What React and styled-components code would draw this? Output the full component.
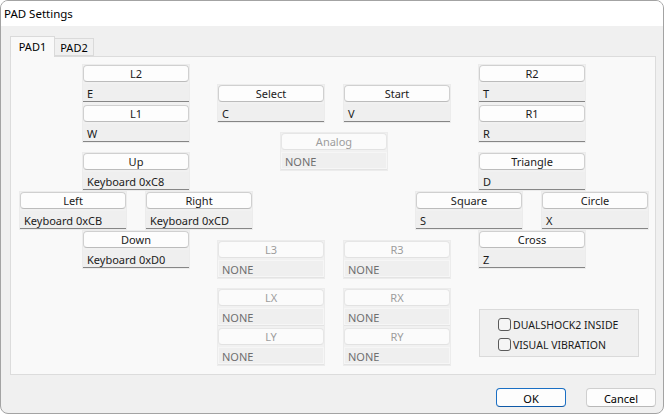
import styled, { createGlobalStyle } from "styled-components";

const GlobalStyle = createGlobalStyle`
  html, body {
    margin: 0;
    padding: 0;
    background: #ffffff;
  }
  body {
    font-family: "Noto Sans", "DejaVu Sans", sans-serif;
    font-size: 11px;
    color: #1b1b1b;
  }
`;

const Window = styled.div`
  box-sizing: border-box;
  width: 664px;
  height: 414px;
  border: 1px solid #a3a3a3;
  border-radius: 8px;
  overflow: hidden;
  background: #f0f0f0;
  display: flex;
  flex-direction: column;
`;

const TitleBar = styled.div`
  height: 25px;
  background: #ffffff;
  display: flex;
  align-items: center;
  padding-left: 3px;
  padding-bottom: 1px;
  box-sizing: border-box;
  font-size: 11.5px;
  color: #000;
`;

const Body = styled.div`
  padding: 10px 7px 0 9px;
  display: flex;
  flex-direction: column;
`;

const TabStrip = styled.div`
  display: flex;
  align-items: flex-end;
  height: 20px;
  position: relative;
  z-index: 1;
`;

const Tab = styled.div`
  box-sizing: border-box;
  width: ${(p) => p.$w}px;
  height: ${(p) => (p.$active ? 21 : 18)}px;
  margin-bottom: ${(p) => (p.$active ? -1 : 0)}px;
  background: ${(p) => (p.$active ? "#f9f9f9" : "#f0f0f0")};
  border: 1px solid #dadada;
  border-bottom: ${(p) => (p.$active ? "none" : "1px solid #dadada")};
  border-left: ${(p) => (p.$first ? "1px solid #dadada" : "none")};
  display: flex;
  align-items: center;
  justify-content: center;
  color: #000;
  padding-bottom: ${(p) => (p.$active ? 1 : 0)}px;
`;

const Panel = styled.div`
  box-sizing: border-box;
  height: 319px;
  border: 1px solid #dcdcdc;
  background: #f9f9f9;
  padding: 8px 0 0 9px;
`;

const Board = styled.div`
  display: grid;
  grid-template-columns: 198px 34px 164px 34px 198px;
  align-items: start;
`;

const Cluster = styled.div`
  grid-row: 1;
  grid-column: ${(p) => p.$cols};
  display: grid;
  grid-template-columns: repeat(4, 43px);
  column-gap: 20px;
  row-gap: 2px;
  align-items: start;
  padding-top: ${(p) => p.$top || 0}px;
`;

const Frame = styled.div`
  grid-column: ${(p) => p.$cols};
  grid-row: ${(p) => p.$row};
  margin-top: ${(p) => p.$mt || 0}px;
  display: flex;
  flex-direction: column;
  gap: ${(p) => p.$gap || 3}px;
  background: #f1f1f1;
  box-shadow: 0 0 0 1px #ececec;
`;

const Pair = styled.div`
  display: flex;
  flex-direction: column;
  gap: 2px;
`;

const KeyButton = styled.div`
  box-sizing: border-box;
  height: 17px;
  padding-top: 1px;
  border: 1px solid ${(p) => (p.$off ? "#e6e6e6" : "#d0d0d0")};
  border-bottom-color: ${(p) => (p.$off ? "#e2e2e2" : "#bcbcbc")};
  border-radius: 4px;
  background: ${(p) => (p.$off ? "#fbfbfb" : "#fdfdfd")};
  color: ${(p) => (p.$off ? "#9d9d9d" : "#1b1b1b")};
  display: flex;
  align-items: center;
  justify-content: center;
  line-height: 14px;
`;

const Field = styled.div`
  box-sizing: border-box;
  height: 18px;
  padding: 2px 0 0 4px;
  background: #efefef;
  border-bottom: 1px solid ${(p) => (p.$off ? "#e4e4e4" : "#868686")};
  box-shadow: ${(p) => (p.$off ? "0 0 0 1px #f6f6f6 inset" : "none")};
  color: ${(p) => (p.$off ? "#6f6f6f" : "#1b1b1b")};
  display: flex;
  align-items: center;
`;

const OptionBox = styled.div`
  grid-column: 2 / 5;
  grid-row: 6;
  margin-top: 37px;
  box-sizing: border-box;
  width: 160px;
  height: 48px;
  background: #f0f0f0;
  border: 1px solid #dadada;
  padding: 7px 0 0 18px;
  display: flex;
  flex-direction: column;
  gap: 6px;
`;

const CheckRow = styled.label`
  display: flex;
  align-items: center;
  gap: 2px;
  height: 13px;
  color: #1b1b1b;
  font-size: 10.5px;
  padding-top: 1px;
`;

const CheckBox = styled.span`
  box-sizing: border-box;
  width: 13px;
  height: 13px;
  margin-top: -1px;
  border: 1px solid #5a5a5a;
  border-radius: 3px;
  background: #f5f5f5;
`;

const Actions = styled.div`
  display: flex;
  justify-content: flex-end;
  gap: 20px;
  margin-top: 13px;
`;

const DialogButton = styled.div`
  box-sizing: border-box;
  width: 70px;
  height: 19px;
  padding-top: 1px;
  border: 1px solid ${(p) => (p.$primary ? "#1a6fc4" : "#cfcfcf")};
  border-bottom-color: ${(p) => (p.$primary ? "#0f5aa8" : "#b8b8b8")};
  border-radius: 4px;
  background: #fdfdfd;
  display: flex;
  align-items: center;
  justify-content: center;
  color: #000;
`;

const Key = ({ label, value, off }) => (
  <Pair>
    <KeyButton $off={off}>{label}</KeyButton>
    <Field $off={off}>{value}</Field>
  </Pair>
);

const Group = ({ cols, row, mt, gap, keys }) => (
  <Frame $cols={cols} $row={row} $mt={mt} $gap={gap}>
    {keys.map((k) => (
      <Key key={k[0]} label={k[0]} value={k[1]} off={k[2]} />
    ))}
  </Frame>
);

export default function App() {
  return (
    <>
      <GlobalStyle />
      <Window>
        <TitleBar>PAD Settings</TitleBar>
        <Body>
          <TabStrip>
            <Tab $active $first $w={45}>PAD1</Tab>
            <Tab $w={39}>PAD2</Tab>
          </TabStrip>
          <Panel>
            <Board>
              <Cluster $cols="1 / 3">
                <Group cols="2 / 4" row={1} keys={[["L2", "E"], ["L1", "W"]]} />
                <Group cols="2 / 4" row={2} mt={9} keys={[["Up", "Keyboard 0xC8"]]} />
                <Group cols="1 / 3" row={3} keys={[["Left", "Keyboard 0xCB"]]} />
                <Group cols="3 / 5" row={3} keys={[["Right", "Keyboard 0xCD"]]} />
                <Group cols="2 / 4" row={4} keys={[["Down", "Keyboard 0xD0"]]} />
              </Cluster>

              <Cluster $cols="2 / 5" $top={20}>
                <Group cols="1 / 3" row={1} keys={[["Select", "C"]]} />
                <Group cols="3 / 5" row={1} keys={[["Start", "V"]]} />
                <Group cols="2 / 4" row={2} mt={9} keys={[["Analog", "NONE", true]]} />
                <Group cols="1 / 3" row={3} mt={69} keys={[["L3", "NONE", true]]} />
                <Group cols="3 / 5" row={3} mt={69} keys={[["R3", "NONE", true]]} />
                <Group
                  cols="1 / 3"
                  row={4}
                  mt={9}
                  gap={2}
                  keys={[["LX", "NONE", true], ["LY", "NONE", true]]}
                />
                <Group
                  cols="3 / 5"
                  row={4}
                  mt={9}
                  gap={2}
                  keys={[["RX", "NONE", true], ["RY", "NONE", true]]}
                />
              </Cluster>

              <Cluster $cols="4 / 6">
                <Group cols="2 / 4" row={1} keys={[["R2", "T"], ["R1", "R"]]} />
                <Group cols="2 / 4" row={2} mt={9} keys={[["Triangle", "D"]]} />
                <Group cols="1 / 3" row={3} keys={[["Square", "S"]]} />
                <Group cols="3 / 5" row={3} keys={[["Circle", "X"]]} />
                <Group cols="2 / 4" row={4} keys={[["Cross", "Z"]]} />
                <OptionBox>
                  <CheckRow>
                    <CheckBox />
                    DUALSHOCK2 INSIDE
                  </CheckRow>
                  <CheckRow>
                    <CheckBox />
                    VISUAL VIBRATION
                  </CheckRow>
                </OptionBox>
              </Cluster>
            </Board>
          </Panel>
          <Actions>
            <DialogButton $primary>OK</DialogButton>
            <DialogButton>Cancel</DialogButton>
          </Actions>
        </Body>
      </Window>
    </>
  );
}
